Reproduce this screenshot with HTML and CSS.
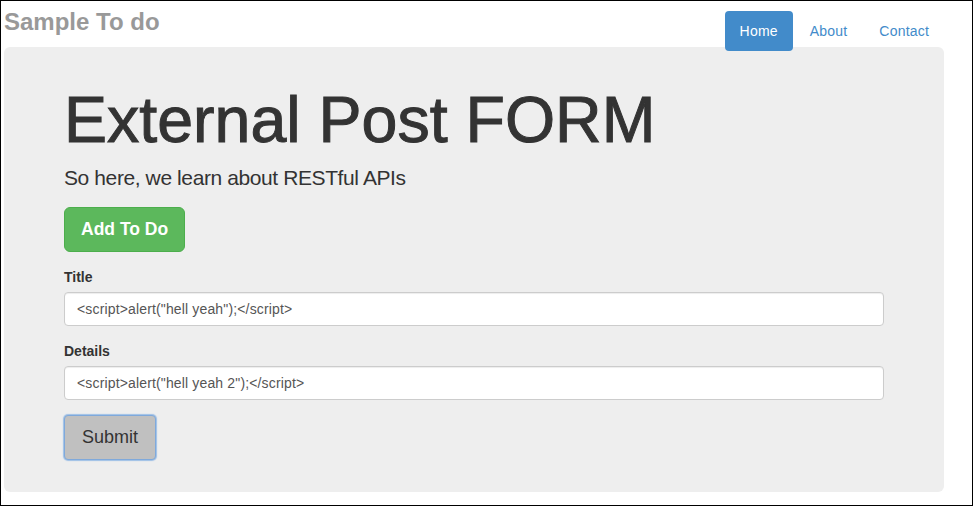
FILE: index.html
```html
<!DOCTYPE html>
<html lang="en">
<head>
<meta charset="utf-8">
<title>Sample To do</title>
<link rel="stylesheet" href="styles.css">
</head>
<body>
<div class="frame">
  <div class="container">
    <header class="header">
      <div class="brand">Sample To do</div>
      <ul class="nav">
        <li><a class="pill active" href="#">Home</a></li>
        <li><a class="pill" href="#">About</a></li>
        <li><a class="pill" href="#">Contact</a></li>
      </ul>
    </header>
    <main class="jumbotron">
      <h1 class="title">External Post FORM</h1>
      <p class="lead">So here, we learn about RESTful APIs</p>
      <button class="btn btn-success" type="button">Add To Do</button>
      <form class="form">
        <div class="form-group">
          <label class="label">Title</label>
          <input class="input" type="text" value="&lt;script&gt;alert(&quot;hell yeah&quot;);&lt;/script&gt;">
        </div>
        <div class="form-group">
          <label class="label">Details</label>
          <input class="input" type="text" value="&lt;script&gt;alert(&quot;hell yeah 2&quot;);&lt;/script&gt;">
        </div>
        <button class="btn btn-submit" type="button">Submit</button>
      </form>
    </main>
  </div>
</div>
</body>
</html>
```

FILE: styles.css
```css
* { box-sizing: border-box; }
html, body {
  margin: 0;
  padding: 0;
  background: #fff;
  font-family: "Liberation Sans", Arial, sans-serif;
  color: #333;
}
.frame {
  width: 973px;
  height: 506px;
  border: 1px solid #000;
  overflow: hidden;
}
.container {
  width: 940px;
  margin-left: 3px;
}
.header {
  display: flex;
  justify-content: space-between;
  align-items: flex-start;
  height: 46px;
}
.brand {
  margin-top: 4px;
  font-size: 24px;
  line-height: 34px;
  font-weight: bold;
  color: #999;
}
.nav {
  position: relative;
  z-index: 1;
  display: flex;
  list-style: none;
  margin: 10px 0 0 0;
  padding: 0;
}
.nav li { margin-left: 2px; }
.pill {
  display: block;
  padding: 10px 15px;
  font-size: 14px;
  line-height: 20px;
  letter-spacing: 0.2px;
  color: #428bca;
  text-decoration: none;
  border-radius: 4px;
}
.pill.active {
  background: #428bca;
  color: #fff;
}
.jumbotron {
  background: #eee;
  border-radius: 6px;
  padding: 38px 60px 32px 60px;
}
.title {
  margin: 0;
  font-size: 64.5px;
  line-height: 70px;
  font-weight: normal;
  color: #333;
  -webkit-text-stroke: 1px #333;
}
.lead {
  margin: 8px 0 14px 0;
  font-size: 21px;
  line-height: 30px;
  letter-spacing: -0.4px;
  color: #333;
}
.btn {
  display: inline-block;
  font-family: "Liberation Sans", Arial, sans-serif;
  font-size: 18px;
  line-height: 23px;
  padding: 10px 16px;
  border-radius: 6px;
  border: 1px solid transparent;
  cursor: pointer;
}
.btn-success {
  background: #5cb85c;
  border-color: #4cae4c;
  color: #fff;
  font-weight: bold;
  font-size: 17.5px;
}
.form { margin-top: 15px; }
.form-group { margin-bottom: 15px; }
.label {
  display: block;
  font-size: 14px;
  line-height: 20px;
  font-weight: bold;
  margin-bottom: 5px;
  color: #333;
}
.input {
  display: block;
  width: 100%;
  height: 34px;
  padding: 6px 12px;
  font-family: "Liberation Sans", Arial, sans-serif;
  font-size: 14px;
  line-height: 20px;
  letter-spacing: 0.15px;
  color: #555;
  background: #fff;
  border: 1px solid #ccc;
  border-radius: 4px;
  box-shadow: inset 0 1px 1px rgba(0,0,0,.075);
}
.btn-submit {
  padding: 10px 17px;
  background: #c0c0c0;
  color: #333;
  border: 1px solid #7fa9db;
  border-radius: 4px;
  box-shadow: 0 0 1px 1px #9dbfe6;
}
```
